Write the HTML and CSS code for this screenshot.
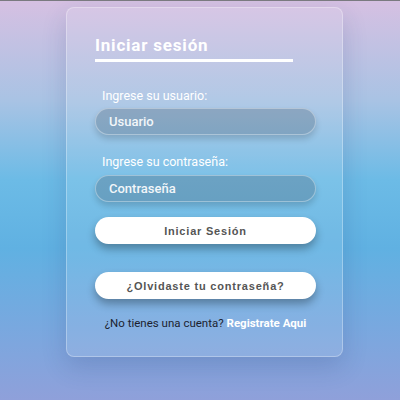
FILE: index.html
```html
<!DOCTYPE html>
<html lang="es">
<head>
<meta charset="utf-8">
<title>Iniciar sesión</title>
<link rel="stylesheet" href="styles.css">
</head>
<body>
<div class="page">
  <form class="card">
    <h1 class="title">Iniciar sesión</h1>
    <label class="label label-first">Ingrese su usuario:</label>
    <div class="input">Usuario</div>
    <label class="label label-second">Ingrese su contraseña:</label>
    <div class="input">Contraseña</div>
    <button type="button" class="btn btn-login">Iniciar Sesión</button>
    <button type="button" class="btn btn-forgot">¿Olvidaste tu contraseña?</button>
    <p class="footer">¿No tienes una cuenta? <a class="link">Registrate Aqui</a></p>
  </form>
</div>
</body>
</html>
```
FILE: styles.css
```css
* { box-sizing: border-box; }
html, body { margin: 0; padding: 0; }
body {
  width: 400px;
  height: 400px;
  overflow: hidden;
  font-family: Roboto, "Liberation Sans", Arial, sans-serif;
  border-top: 1px solid #7a7a80;
  background: linear-gradient(180deg, #d6c0e2 0%, #a9c3e4 25%, #6cbbe6 45%, #60b1e2 62%, #79a8df 82%, #8fa0da 100%);
}
.page {
  padding: 6px 0 0 66px;
}
.card {
  width: 277px;
  height: 350px;
  margin: 0;
  padding: 0 27px 0 28px;
  display: flex;
  flex-direction: column;
  border-radius: 8px;
  border: 1px solid rgba(255,255,255,0.3);
  background: rgba(255,255,255,0.1);
  box-shadow: 0 10px 24px rgba(40,50,110,0.18);
}
.title {
  width: 198px;
  margin: 27px 0 0 0;
  padding-bottom: 4px;
  font-size: 17px;
  line-height: 20px;
  font-weight: bold;
  letter-spacing: 0.8px;
  color: #fff;
  border-bottom: 3px solid #fff;
}
.label {
  display: block;
  font-size: 12.5px;
  line-height: 16px;
  color: #fff;
  padding-left: 7px;
}
.label-first { margin-top: 26px; }
.label-second { margin-top: 19px; }
.input {
  margin-top: 4px;
  width: 221px;
  height: 27px;
  border-radius: 14px;
  padding-left: 13px;
  display: flex;
  align-items: center;
  font-size: 13px;
  font-weight: 500;
  color: #f2f6f9;
  background: rgba(70,90,110,0.3);
  border: 1px solid rgba(255,255,255,0.35);
  box-shadow: 0 4px 6px rgba(0,0,0,0.16);
}
.label-second + .input { margin-top: 5px; }
.btn {
  width: 221px;
  height: 27px;
  border: none;
  border-radius: 14px;
  background: #fff;
  color: #555;
  font-family: "Liberation Sans", Arial, sans-serif;
  font-size: 11px;
  font-weight: bold;
  letter-spacing: 0.8px;
  padding: 0;
  box-shadow: 0 5px 8px rgba(0,0,0,0.3);
}
.btn-login { margin-top: 15px; }
.btn-forgot { margin-top: 28px; }
.footer {
  margin: 17px 0 0 0;
  width: 221px;
  text-align: center;
  font-size: 11.5px;
  line-height: 15px;
  color: #1c1f30;
}
.link {
  color: #fff;
  font-weight: bold;
}
```
